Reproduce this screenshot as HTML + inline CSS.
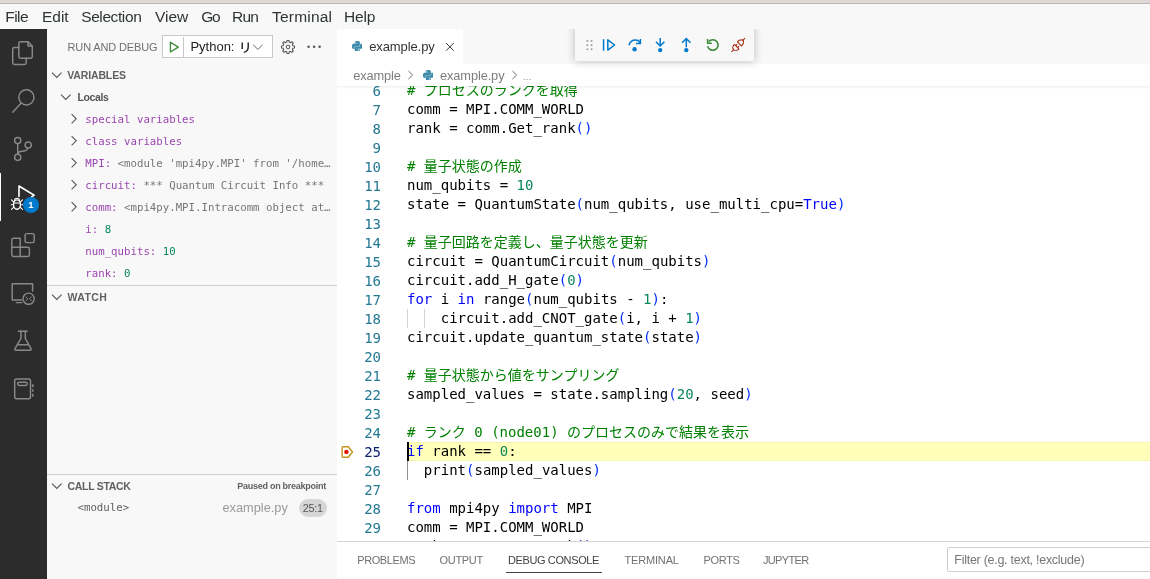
<!DOCTYPE html>
<html lang="ja">
<head>
<meta charset="utf-8">
<title>example.py - Visual Studio Code</title>
<style>
*{box-sizing:border-box;margin:0;padding:0}
html,body{width:1150px;height:579px;overflow:hidden;background:#fff}
body{position:relative;font-family:"Liberation Sans","Noto Sans CJK JP",sans-serif;color:#333;-webkit-font-smoothing:antialiased}
.abs{position:absolute}
#menubar,#activity,#sidebar,#editor,#panel{will-change:transform}
.t{position:absolute;white-space:pre;line-height:1}
/* top strip */
#strip{left:0;top:0;width:1150px;height:3px;background:#e1d7d7}
#stripline{left:0;top:3px;width:1150px;height:1px;background:#bbb7b1}
/* menu */
#menubar{left:0;top:4px;width:1150px;height:25px;background:#f8f8f8}
.menu{position:absolute;top:-0.5px;height:25px;line-height:25px;font-size:15.5px;color:#2e3436;white-space:pre}
/* activity bar */
#activity{left:0;top:29px;width:47px;height:550px;background:#2c2c2c}
#activity svg{position:absolute;overflow:visible}
/* sidebar */
#sidebar{left:47px;top:29px;width:290px;height:550px;background:#f8f8f8}
.hdr{position:absolute;font-size:10.5px;letter-spacing:-0.3px;font-weight:bold;color:#616161;white-space:pre;line-height:22px;height:22px}
.row{position:absolute;left:0;width:290px;height:22px;line-height:22px;white-space:pre;font-family:"DejaVu Sans Mono","Liberation Mono",monospace;font-size:10.72px}
.nm{color:#9b46b0}.vl{color:#767676}.num{color:#098658}
.chev{position:absolute}
/* editor */
#editor{left:337px;top:29px;width:813px;height:512px;background:#fff;overflow:hidden}
#tabs{left:0;top:0;width:813px;height:35px;background:#f8f8f8}
#tab{left:0;top:0;width:126px;height:35px;background:#fff}
#crumbs{left:0;top:35px;width:813px;height:22px;background:#fff}
#code{left:0;top:57px;width:813px;height:455px;overflow:hidden}
.ln{position:absolute;left:0;margin-top:1px;width:44px;text-align:right;height:19px;line-height:19px;font-family:"DejaVu Sans Mono","Noto Sans CJK JP",monospace;font-size:14px;color:#237893;white-space:pre}
.cl{position:absolute;left:70px;height:19px;line-height:19px;font-family:"DejaVu Sans Mono","Noto Sans CJK JP",monospace;font-size:14px;color:#000;white-space:pre}
.c{color:#008000}.k{color:#0000ff}.n{color:#098658}.b{color:#0431fa}.kc{color:#af00db}
/* panel */
#panel{left:337px;top:541px;width:813px;height:38px;background:#fff;border-top:1px solid #d4d4d4}
.ptab{position:absolute;top:0;font-size:11px;color:#717171;white-space:pre;line-height:1}
</style>
</head>
<body>
<div id="strip" class="abs"></div>
<div id="stripline" class="abs"></div>

<div id="menubar" class="abs">
<span class="menu" style="left:5.3px;letter-spacing:-0.56px">File</span>
<span class="menu" style="left:42.0px;letter-spacing:-0.02px">Edit</span>
<span class="menu" style="left:81.2px;letter-spacing:-0.40px">Selection</span>
<span class="menu" style="left:155.0px;letter-spacing:0.00px">View</span>
<span class="menu" style="left:201.2px;letter-spacing:-1.20px">Go</span>
<span class="menu" style="left:232.0px;letter-spacing:-0.72px">Run</span>
<span class="menu" style="left:272.0px;letter-spacing:0.20px">Terminal</span>
<span class="menu" style="left:344.0px;letter-spacing:-0.20px">Help</span>
</div>

<div id="activity" class="abs">
<!--ACTIVITY-->
<div class="abs" style="left:0;top:144px;width:1.4px;height:48px;background:#fff"></div>
<svg style="left:0;top:0" width="47" height="550" viewBox="0 0 47 550" fill="none" stroke="#898989" stroke-width="1.45" stroke-linecap="round" stroke-linejoin="round">
<!-- explorer -->
<path d="M20.5 12.7H28L32.3 17V27.5a1.7 1.7 0 0 1-1.7 1.7H20.5a1.7 1.7 0 0 1-1.7-1.7V14.4a1.7 1.7 0 0 1 1.7-1.7Z"/>
<path d="M28 12.7V17H32.3"/>
<path d="M18.8 18.5H14.4a1.7 1.7 0 0 0-1.7 1.7V33.7a1.7 1.7 0 0 0 1.7 1.7H24.5a1.7 1.7 0 0 0 1.7-1.7V29.2"/>
<!-- search -->
<circle cx="26.4" cy="68.3" r="7.6"/>
<path d="M21.2 74L12.7 83.2"/>
<!-- scm -->
<circle cx="17.7" cy="111.6" r="3.1"/>
<circle cx="28.2" cy="116.1" r="3.1"/>
<circle cx="17.7" cy="128.3" r="3.1"/>
<path d="M17.7 114.7V125.2"/>
<path d="M27.6 119.2C26.8 121.6 24.6 122.2 22 122.2C19.6 122.2 18.1 123.3 17.8 125"/>
<!-- extensions -->
<path d="M13.5 209.2H20.2V218.3H27.7a1.7 1.7 0 0 1 1.7 1.7V225.8a1.7 1.7 0 0 1-1.7 1.7H13.5a1.7 1.7 0 0 1-1.7-1.7V210.9a1.7 1.7 0 0 1 1.7-1.7Z"/>
<path d="M20.2 218.3V227.5M11.8 218.3H20.2"/>
<rect x="25.1" y="204.6" width="9.1" height="9" rx="1.7"/>
<!-- remote -->
<path d="M21.5 270.9H12.2V254.7H32.6V262"/>
<path d="M16.4 273.6H21.8"/>
<circle cx="28.6" cy="269.7" r="5.6"/>
<path d="M26 267.8L27.8 269.8L26 271.8M31.4 267.8L29.6 269.8L31.4 271.8" stroke-width="0.95"/>
<!-- beaker -->
<path d="M18.4 302.3H27.2"/>
<path d="M20.9 302.3V309.3L14.9 319.8a.95 .95 0 0 0 .8 1.4H30.3a.95 .95 0 0 0 .8-1.4L25.3 309.3V302.3"/>
<path d="M18 315.8H28.2"/>
<!-- notebook -->
<rect x="14.7" y="349.9" width="15.8" height="19.9" rx="1.8"/>
<rect x="17.6" y="353.2" width="9.6" height="3.2" rx="1.6"/>
<path d="M32.8 355.3V358.3M32.8 360.2V362.8M32.8 364.8V367.8" stroke-linecap="butt"/>
</svg>
<!-- debug active -->
<svg style="left:0;top:0" width="47" height="550" viewBox="0 0 47 550" fill="none" stroke="#ffffff" stroke-width="1.4" stroke-linecap="round" stroke-linejoin="round">
<path d="M19 167.5V157L34.2 166.2L31.5 168" stroke-width="1.6"/>
<ellipse cx="17" cy="175.6" rx="3.5" ry="4.7"/>
<path d="M13.6 174H20.4" stroke-width="1.1"/>
<path d="M14.6 171.6a2.4 2.4 0 0 1 4.8 0" stroke-width="1.1"/>
<path d="M13.5 172.8L11.5 170.8M13.4 175.8H11.2M13.6 178.4L11.5 180.4M20.5 172.8L22.5 170.8M20.6 175.8H22.8M20.4 178.4L22.5 180.4" stroke-width="1.1"/>
</svg>
<div class="abs" style="left:23px;top:168px;width:16px;height:16px;border-radius:8px;background:#007acc"></div>
<div class="t" style="left:23px;top:171px;width:16px;text-align:center;font-size:9.5px;font-weight:bold;color:#fff">1</div>
<!--/ACTIVITY-->
</div>

<div id="sidebar" class="abs">
<!--SIDEBAR-->
<div class="t" style="left:20.5px;top:13px;font-size:11px;color:#6f6f6f;letter-spacing:-0.13px">RUN AND DEBUG</div>
<div class="abs" style="left:115px;top:6px;width:111px;height:23px;background:#fff;border:1px solid #c8c8c8"></div>
<div class="abs" style="left:136px;top:8px;width:1px;height:20px;background:#c8c8c8"></div>
<svg class="abs" style="left:121px;top:11px" width="13" height="14" viewBox="0 0 13 14" fill="none" stroke="#388a34" stroke-width="1.3" stroke-linejoin="round"><path d="M2.4 2.2V12L10.3 7.1Z"/></svg>
<div class="t" style="left:143.4px;top:11.4px;font-size:13px;color:#222">Python: <span style="font-weight:500;font-size:13px;position:relative;top:0.6px;left:0.6px">リ</span></div>
<svg class="abs" style="left:205.3px;top:14.3px" width="12" height="8" viewBox="0 0 12 8" fill="none" stroke="#6a6a6a" stroke-width="1"><path d="M1.2 1.8L5.9 6.4L10.6 1.8"/></svg>
<svg class="abs" style="left:233px;top:10px" width="16" height="16" viewBox="0 0 16 16" fill="none" stroke="#555" stroke-width="1.05" stroke-linejoin="round"><path d="M6.79 3.15L6.92 1.49L9.08 1.49L9.21 3.15L10.58 3.72L11.84 2.63L13.37 4.16L12.28 5.42L12.85 6.79L14.51 6.92L14.51 9.08L12.85 9.21L12.28 10.58L13.37 11.84L11.84 13.37L10.58 12.28L9.21 12.85L9.08 14.51L6.92 14.51L6.79 12.85L5.42 12.28L4.16 13.37L2.63 11.84L3.72 10.58L3.15 9.21L1.49 9.08L1.49 6.92L3.15 6.79L3.72 5.42L2.63 4.16L4.16 2.63L5.42 3.72Z"/><circle cx="8" cy="8" r="1.7"/></svg>
<svg class="abs" style="left:259px;top:15px" width="16" height="6" viewBox="0 0 16 6" fill="#555"><circle cx="2.6" cy="2.8" r="1.25"/><circle cx="8.1" cy="2.8" r="1.25"/><circle cx="13.6" cy="2.8" r="1.25"/></svg>
<svg class="abs" style="left:4.3px;top:42px" width="12" height="8" viewBox="0 0 12 8" fill="none" stroke="#555" stroke-width="1.1"><path d="M1 1.6L5.8 6.4L10.6 1.6"/></svg>
<div class="hdr" style="left:20.3px;top:35px;letter-spacing:-0.15px">VARIABLES</div>
<svg class="abs" style="left:13px;top:64px" width="12" height="8" viewBox="0 0 12 8" fill="none" stroke="#555" stroke-width="1.1"><path d="M1 1.6L5.8 6.4L10.6 1.6"/></svg>
<div class="hdr" style="left:30.5px;top:57px;color:#555;letter-spacing:-0.4px">Locals</div>
<svg class="abs" style="left:23px;top:84px" width="8" height="12" viewBox="0 0 8 12" fill="none" stroke="#555" stroke-width="1.1"><path d="M1.6 1.2L6.2 5.8L1.6 10.4"/></svg>
<div class="row" style="top:80px;padding-left:38.3px"><span class="nm">special variables</span></div>
<svg class="abs" style="left:23px;top:106px" width="8" height="12" viewBox="0 0 8 12" fill="none" stroke="#555" stroke-width="1.1"><path d="M1.6 1.2L6.2 5.8L1.6 10.4"/></svg>
<div class="row" style="top:102px;padding-left:38.3px"><span class="nm">class variables</span></div>
<svg class="abs" style="left:23px;top:128px" width="8" height="12" viewBox="0 0 8 12" fill="none" stroke="#555" stroke-width="1.1"><path d="M1.6 1.2L6.2 5.8L1.6 10.4"/></svg>
<div class="row" style="top:124px;padding-left:38.3px"><span class="nm">MPI:</span><span class="vl"> &lt;module &#x27;mpi4py.MPI&#x27; from &#x27;/home…</span></div>
<svg class="abs" style="left:23px;top:150px" width="8" height="12" viewBox="0 0 8 12" fill="none" stroke="#555" stroke-width="1.1"><path d="M1.6 1.2L6.2 5.8L1.6 10.4"/></svg>
<div class="row" style="top:146px;padding-left:38.3px"><span class="nm">circuit:</span><span class="vl"> *** Quantum Circuit Info ***</span></div>
<svg class="abs" style="left:23px;top:172px" width="8" height="12" viewBox="0 0 8 12" fill="none" stroke="#555" stroke-width="1.1"><path d="M1.6 1.2L6.2 5.8L1.6 10.4"/></svg>
<div class="row" style="top:168px;padding-left:38.3px"><span class="nm">comm:</span><span class="vl"> &lt;mpi4py.MPI.Intracomm object at…</span></div>
<div class="row" style="top:190px;padding-left:38.3px"><span class="nm">i:</span><span class="num"> 8</span></div>
<div class="row" style="top:212px;padding-left:38.3px"><span class="nm">num_qubits:</span><span class="num"> 10</span></div>
<div class="row" style="top:234px;padding-left:38.3px"><span class="nm">rank:</span><span class="num"> 0</span></div>
<div class="abs" style="left:0;top:256px;width:290px;height:1px;background:#cfcfcf"></div>
<svg class="abs" style="left:4.3px;top:264px" width="12" height="8" viewBox="0 0 12 8" fill="none" stroke="#555" stroke-width="1.1"><path d="M1 1.6L5.8 6.4L10.6 1.6"/></svg>
<div class="hdr" style="left:20.5px;top:257px;letter-spacing:0.4px">WATCH</div>
<div class="abs" style="left:0;top:445px;width:290px;height:1px;background:#cfcfcf"></div>
<svg class="abs" style="left:4.3px;top:453px" width="12" height="8" viewBox="0 0 12 8" fill="none" stroke="#555" stroke-width="1.1"><path d="M1 1.6L5.8 6.4L10.6 1.6"/></svg>
<div class="hdr" style="left:20.5px;top:446px">CALL STACK</div>
<div class="t" style="left:190.3px;top:453px;font-size:9px;font-weight:bold;color:#616161;letter-spacing:-0.27px">Paused on breakpoint</div>
<div class="row" style="top:468px;padding-left:30.5px;color:#616161">&lt;module&gt;</div>
<div class="t" style="left:175.4px;top:472.6px;font-size:12.8px;color:#9a9a9a">example.py</div>
<div class="abs" style="left:252px;top:470px;width:27.5px;height:18px;border-radius:9px;background:#d6d6d6"></div>
<div class="t" style="left:252px;top:474px;width:27.5px;text-align:center;font-size:10.8px;color:#555;letter-spacing:-0.3px">25:1</div>
<!--/SIDEBAR-->
</div>

<div id="editor" class="abs">
<div id="tabs" class="abs"></div>
<div id="tab" class="abs"></div>
<div id="crumbs" class="abs"></div>
<!--EDITORTOP-->
<svg class="abs" style="left:14.5px;top:11.9px" width="10.6" height="10.6" viewBox="0 0 24 24" fill="#3d8bad"><path d="M14.25.18l.9.2.73.26.59.3.45.32.34.34.25.34.16.33.1.3.04.26.02.2-.01.13V8.5l-.05.63-.13.55-.21.46-.26.38-.3.31-.33.25-.35.19-.35.14-.33.1-.3.07-.26.04-.21.02H8.77l-.69.05-.59.14-.5.22-.41.27-.33.32-.27.35-.2.36-.15.37-.1.35-.07.32-.04.27-.02.21v3.06H3.17l-.21-.03-.28-.07-.32-.12-.35-.18-.36-.26-.36-.36-.35-.46-.32-.59-.28-.73-.21-.88-.14-1.05-.05-1.23.06-1.22.16-1.04.24-.87.32-.71.36-.57.4-.44.42-.33.42-.24.4-.16.36-.1.32-.05.24-.01h.16l.06.01h8.16v-.83H6.18l-.01-2.75-.02-.37.05-.34.11-.31.17-.28.25-.26.31-.23.38-.2.44-.18.51-.15.58-.12.64-.1.71-.06.77-.04.84-.02 1.27.05zm-6.3 1.98l-.23.33-.08.41.08.41.23.34.33.22.41.09.41-.09.33-.22.23-.34.08-.41-.08-.41-.23-.33-.33-.22-.41-.09-.41.09zm13.09 3.95l.28.06.32.12.35.18.36.27.36.35.35.47.32.59.28.73.21.88.14 1.04.05 1.23-.06 1.23-.16 1.04-.24.86-.32.71-.36.57-.4.45-.42.33-.42.24-.4.16-.36.09-.32.05-.24.02-.16-.01h-8.22v.82h5.84l.01 2.76.02.36-.05.34-.11.31-.17.29-.25.25-.31.24-.38.2-.44.17-.51.15-.58.13-.64.09-.71.07-.77.04-.84.01-1.27-.04-1.07-.14-.9-.2-.73-.25-.59-.3-.45-.33-.34-.34-.25-.34-.16-.33-.1-.3-.04-.25-.02-.2.01-.13v-5.34l.05-.64.13-.54.21-.46.26-.38.3-.32.33-.24.35-.2.35-.14.33-.1.3-.06.26-.04.21-.02.13-.01h5.84l.69-.05.59-.14.5-.21.41-.28.33-.32.27-.35.2-.36.15-.36.1-.35.07-.32.04-.28.02-.21V6.07h2.09l.14.01zm-6.47 14.25l-.23.33-.08.41.08.41.23.33.33.23.41.08.41-.08.33-.23.23-.33.08-.41-.08-.41-.23-.33-.33-.23-.41-.08-.41.08z"/></svg>
<div class="t" style="left:32.2px;top:10.9px;font-size:13px;color:#333;letter-spacing:-0.1px">example.py</div>
<svg class="abs" style="left:107.5px;top:13px" width="10" height="10" viewBox="0 0 10 10" fill="none" stroke="#3a3a3a" stroke-width="1"><path d="M1.1 1.1L8.7 8.7M8.7 1.1L1.1 8.7"/></svg>
<div class="t" style="left:16.2px;top:40.9px;font-size:12.8px;color:#7d7d7d;letter-spacing:-0.1px">example</div>
<svg class="abs" style="left:69.7px;top:41.4px" width="8" height="10" viewBox="0 0 8 10" fill="none" stroke="#6e6e6e" stroke-width="1"><path d="M1.5 1L5.6 5L1.5 9"/></svg>
<svg class="abs" style="left:85.6px;top:40.9px" width="10.6" height="10.6" viewBox="0 0 24 24" fill="#3d8bad"><path d="M14.25.18l.9.2.73.26.59.3.45.32.34.34.25.34.16.33.1.3.04.26.02.2-.01.13V8.5l-.05.63-.13.55-.21.46-.26.38-.3.31-.33.25-.35.19-.35.14-.33.1-.3.07-.26.04-.21.02H8.77l-.69.05-.59.14-.5.22-.41.27-.33.32-.27.35-.2.36-.15.37-.1.35-.07.32-.04.27-.02.21v3.06H3.17l-.21-.03-.28-.07-.32-.12-.35-.18-.36-.26-.36-.36-.35-.46-.32-.59-.28-.73-.21-.88-.14-1.05-.05-1.23.06-1.22.16-1.04.24-.87.32-.71.36-.57.4-.44.42-.33.42-.24.4-.16.36-.1.32-.05.24-.01h.16l.06.01h8.16v-.83H6.18l-.01-2.75-.02-.37.05-.34.11-.31.17-.28.25-.26.31-.23.38-.2.44-.18.51-.15.58-.12.64-.1.71-.06.77-.04.84-.02 1.27.05zm-6.3 1.98l-.23.33-.08.41.08.41.23.34.33.22.41.09.41-.09.33-.22.23-.34.08-.41-.08-.41-.23-.33-.33-.22-.41-.09-.41.09zm13.09 3.95l.28.06.32.12.35.18.36.27.36.35.35.47.32.59.28.73.21.88.14 1.04.05 1.23-.06 1.23-.16 1.04-.24.86-.32.71-.36.57-.4.45-.42.33-.42.24-.4.16-.36.09-.32.05-.24.02-.16-.01h-8.22v.82h5.84l.01 2.76.02.36-.05.34-.11.31-.17.29-.25.25-.31.24-.38.2-.44.17-.51.15-.58.13-.64.09-.71.07-.77.04-.84.01-1.27-.04-1.07-.14-.9-.2-.73-.25-.59-.3-.45-.33-.34-.34-.25-.34-.16-.33-.1-.3-.04-.25-.02-.2.01-.13v-5.34l.05-.64.13-.54.21-.46.26-.38.3-.32.33-.24.35-.2.35-.14.33-.1.3-.06.26-.04.21-.02.13-.01h5.84l.69-.05.59-.14.5-.21.41-.28.33-.32.27-.35.2-.36.15-.36.1-.35.07-.32.04-.28.02-.21V6.07h2.09l.14.01zm-6.47 14.25l-.23.33-.08.41.08.41.23.33.33.23.41.08.41-.08.33-.23.23-.33.08-.41-.08-.41-.23-.33-.33-.23-.41-.08-.41.08z"/></svg>
<div class="t" style="left:103px;top:40.9px;font-size:12.8px;color:#7d7d7d;letter-spacing:-0.1px">example.py</div>
<svg class="abs" style="left:174.2px;top:41.4px" width="8" height="10" viewBox="0 0 8 10" fill="none" stroke="#6e6e6e" stroke-width="1"><path d="M1.5 1L5.6 5L1.5 9"/></svg>
<div class="t" style="left:185.6px;top:40.9px;font-size:12.8px;color:#7d7d7d"><span style="font-size:9px">…</span></div>
<!--/EDITORTOP-->
<div id="code" class="abs">
<!--CODE-->
<div class="abs" style="left:70px;top:356px;width:743px;height:19px;background:#ffffba;border-top:1.5px solid #f6f6b1;border-bottom:1.5px solid #f6f6b1"></div>
<div class="ln" style="top:-5px">6</div>
<div class="cl" style="top:-5px"><span class="c"># プロセスのランクを取得</span></div>
<div class="ln" style="top:14px">7</div>
<div class="cl" style="top:14px">comm = MPI.COMM_WORLD</div>
<div class="ln" style="top:33px">8</div>
<div class="cl" style="top:33px">rank = comm.Get_rank<span class="b">()</span></div>
<div class="ln" style="top:52px">9</div>
<div class="cl" style="top:52px"></div>
<div class="ln" style="top:71px">10</div>
<div class="cl" style="top:71px"><span class="c"># 量子状態の作成</span></div>
<div class="ln" style="top:90px">11</div>
<div class="cl" style="top:90px">num_qubits = <span class="n">10</span></div>
<div class="ln" style="top:109px">12</div>
<div class="cl" style="top:109px">state = QuantumState<span class="b">(</span>num_qubits, use_multi_cpu=<span class="k">True</span><span class="b">)</span></div>
<div class="ln" style="top:128px">13</div>
<div class="cl" style="top:128px"></div>
<div class="ln" style="top:147px">14</div>
<div class="cl" style="top:147px"><span class="c"># 量子回路を定義し、量子状態を更新</span></div>
<div class="ln" style="top:166px">15</div>
<div class="cl" style="top:166px">circuit = QuantumCircuit<span class="b">(</span>num_qubits<span class="b">)</span></div>
<div class="ln" style="top:185px">16</div>
<div class="cl" style="top:185px">circuit.add_H_gate<span class="b">(</span><span class="n">0</span><span class="b">)</span></div>
<div class="ln" style="top:204px">17</div>
<div class="cl" style="top:204px"><span class="k">for</span> i <span class="k">in</span> range<span class="b">(</span>num_qubits - <span class="n">1</span><span class="b">)</span>:</div>
<div class="ln" style="top:223px">18</div>
<div class="cl" style="top:223px">    circuit.add_CNOT_gate<span class="b">(</span>i, i + <span class="n">1</span><span class="b">)</span></div>
<div class="ln" style="top:242px">19</div>
<div class="cl" style="top:242px">circuit.update_quantum_state<span class="b">(</span>state<span class="b">)</span></div>
<div class="ln" style="top:261px">20</div>
<div class="cl" style="top:261px"></div>
<div class="ln" style="top:280px">21</div>
<div class="cl" style="top:280px"><span class="c"># 量子状態から値をサンプリング</span></div>
<div class="ln" style="top:299px">22</div>
<div class="cl" style="top:299px">sampled_values = state.sampling<span class="b">(</span><span class="n">20</span>, seed<span class="b">)</span></div>
<div class="ln" style="top:318px">23</div>
<div class="cl" style="top:318px"></div>
<div class="ln" style="top:337px">24</div>
<div class="cl" style="top:337px"><span class="c"># ランク 0 (node01) のプロセスのみで結果を表示</span></div>
<div class="ln" style="top:356px;color:#0b216f">25</div>
<div class="cl" style="top:356px"><span class="k">if</span> rank == <span class="n">0</span>:</div>
<div class="ln" style="top:375px">26</div>
<div class="cl" style="top:375px">  print<span class="b">(</span>sampled_values<span class="b">)</span></div>
<div class="ln" style="top:394px">27</div>
<div class="cl" style="top:394px"></div>
<div class="ln" style="top:413px">28</div>
<div class="cl" style="top:413px"><span class="k">from</span> mpi4py <span class="k">import</span> MPI</div>
<div class="ln" style="top:432px">29</div>
<div class="cl" style="top:432px">comm = MPI.COMM_WORLD</div>
<div class="ln" style="top:451px">30</div>
<div class="cl" style="top:451px">rank = comm.Get_rank<span class="b">()</span></div>
<div class="abs" style="left:70px;top:223px;width:1px;height:19px;background:#d3d3d3"></div>
<div class="abs" style="left:87px;top:223px;width:1px;height:19px;background:#d3d3d3"></div>
<div class="abs" style="left:70px;top:375px;width:1px;height:19px;background:#939393"></div>
<div class="abs" style="left:70px;top:356px;width:2px;height:19px;background:#000"></div>
<svg class="abs" style="left:0;top:356px" width="20" height="20" viewBox="0 356 20 20" fill="none"><path d="M6.1 360.8H11.2L15.5 366L11.2 371.2H6.1a1 1 0 0 1 -1 -1V361.8a1 1 0 0 1 1 -1Z" stroke="#c4941a" stroke-width="1.4" stroke-linejoin="round"/><circle cx="9.4" cy="365.9" r="2.2" fill="#e51400"/></svg>
<div class="abs" style="left:0;top:0;width:813px;height:3px;background:linear-gradient(rgba(0,0,0,0.06),rgba(0,0,0,0))"></div>
<!--/CODE-->
</div>
<!--TOOLBAR-->
<div class="abs" style="left:238px;top:-4px;width:179px;height:36px;background:#f8f8f8;box-shadow:0 0 8px 1px rgba(0,0,0,0.2)"></div>
<svg class="abs" style="left:238px;top:0" width="179" height="32" viewBox="0 0 179 32" fill="none" stroke-linecap="butt" stroke-linejoin="miter">
<g fill="#9c9c9c"><rect x="11.5" y="11.1" width="1.7" height="1.7"/><rect x="15.7" y="11.1" width="1.7" height="1.7"/><rect x="11.5" y="15.3" width="1.7" height="1.7"/><rect x="15.7" y="15.3" width="1.7" height="1.7"/><rect x="11.5" y="19.4" width="1.7" height="1.7"/><rect x="15.7" y="19.4" width="1.7" height="1.7"/></g>
<g stroke="#007acc" stroke-width="1.5">
<path d="M28.55 10.2V21.7"/>
<path d="M32.8 10.9V21.1L39.6 16Z" stroke-linejoin="round"/>
<path d="M53.9 16.2C55 12.6 58 11 60.5 11C62.6 11 64.3 12.2 65 13.6"/>
<path d="M65.4 10V14.5H61"/>
<path d="M85.2 9.1V16.6"/>
<path d="M81 12.8L85.2 17L89.4 12.8"/>
<path d="M111.3 18.3V9.6"/>
<path d="M107.1 13.8L111.3 9.6L115.5 13.8"/>
</g>
<g fill="#007acc"><circle cx="59.6" cy="20.2" r="2.2"/><circle cx="85.2" cy="21.1" r="2.2"/><circle cx="111.3" cy="21.1" r="2.2"/></g>
<g stroke="#388a34" stroke-width="1.5">
<path d="M133.7 12.6A5.3 5.3 0 1 1 132.6 17.2"/>
<path d="M132.6 10V14.2H136.8"/>
</g>
<g stroke="#a1260d" stroke-width="1.05" stroke-linejoin="round" transform="translate(163.3 16) rotate(-45)">
<path d="M-9.6 0H-6.6"/>
<path d="M-2.3 -3.1H-3.5A3.1 3.1 0 0 0 -3.5 3.1H-2.3Z"/>
<path d="M-2.3 -1.4H-0.3M-2.3 1.4H-0.3"/>
<path d="M1.5 -2.8H4L6.4 -1V1L4 2.8H1.5Z"/>
<path d="M6.4 0H9.6"/>
</g>
</svg>
<!--/TOOLBAR-->
</div>

<div id="panel" class="abs">
<!--PANEL-->
<div class="ptab" style="left:20.3px;top:13.2px;letter-spacing:-0.42px;color:#717171">PROBLEMS</div>
<div class="ptab" style="left:102.5px;top:13.2px;letter-spacing:-0.3px;color:#717171">OUTPUT</div>
<div class="ptab" style="left:170.9px;top:13.2px;letter-spacing:-0.37px;color:#424242">DEBUG CONSOLE</div>
<div class="abs" style="left:169px;top:30px;width:96px;height:1px;background:#424242"></div>
<div class="ptab" style="left:287.4px;top:13.2px;letter-spacing:-0.15px;color:#717171">TERMINAL</div>
<div class="ptab" style="left:366.4px;top:13.2px;letter-spacing:-0.3px;color:#717171">PORTS</div>
<div class="ptab" style="left:425.9px;top:13.2px;letter-spacing:-0.65px;color:#717171">JUPYTER</div>
<div class="abs" style="left:610px;top:5px;width:210px;height:25px;background:#fff;border:1px solid #cecece;border-radius:2px"></div>
<div class="t" style="left:617.3px;top:12.3px;font-size:12.5px;color:#767676;letter-spacing:-0.27px">Filter (e.g. text, !exclude)</div>
<!--/PANEL-->
</div>
</body>
</html>
